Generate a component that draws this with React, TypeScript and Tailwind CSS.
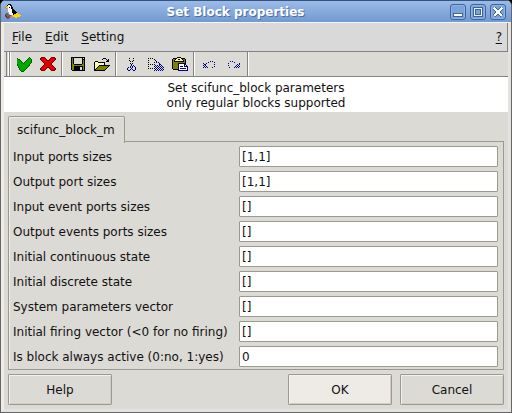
import React from "react";

const colors: Record<string, string> = {
  K: "#000000",
  O: "#808000",
  Y: "#ffff66",
  W: "#ffffff",
  L: "#dcdad5",
  N: "#000080",
  B: "#1b3a9c",
  R: "#e00000",
  D: "#700000",
  G: "#00a800",
  H: "#006000",
  A: "#ffd700",
  T: "#e8701a",
  M: "#a04040",
  E: "#3f8a4a",
};

function PixelIcon({ rows }: { rows: string[] }) {
  const width = Math.max(...rows.map((row) => row.length));
  return (
    <svg width={width} height={rows.length} shapeRendering="crispEdges" aria-hidden="true" className="block shrink-0">
      {rows.flatMap((row, y) =>
        row.split("").map((c, x) =>
          colors[c] ? <rect key={`${x}-${y}`} x={x} y={y} width={1} height={1} fill={colors[c]} /> : null,
        ),
      )}
    </svg>
  );
}

const puffin = [
  "...KKK..........",
  "..KWWKK.........",
  ".TAWWWK.........",
  "TAAWKWKK........",
  ".T.WWWKK........",
  "...WWWWKK.......",
  "...WWWWKKK......",
  "...WWWWKKKK.....",
  "....WWWKKKKK....",
  ".MM.WWWWKKKAA...",
  "MMEE.WWWKAAAAAA.",
  "BMEEMMTAAAAAAAAA",
  "MBEMMT..AAAAAAA.",
  ".BMMMT....AA....",
  "..MM............",
];

const check = [
  "............H..",
  "H..........HGH.",
  "GHH.......HGGGH",
  "GGGH.....HGGGGH",
  "GGGGH...HGGGGGH",
  "GGGGGH.HGGGGGGH",
  "GGGGGGHGGGGGGH.",
  "HGGGGGGGGGGGH..",
  "HGGGGGGGGGGGH..",
  ".HGGGGGGGGGH...",
  ".HGGGGGGGGH....",
  "..HGGGGGGH.....",
  "..HGGGGGH......",
  "...HGGGH.......",
  "....HHH........",
];

const cross = [
  ".DDDD......DDDD.",
  "DRRRRD....DRRRRD",
  "DRRRRRD..DRRRRRD",
  ".DRRRRRDDRRRRRD.",
  "..DRRRRRRRRRRD..",
  "...DRRRRRRRRD...",
  "....DRRRRRRD....",
  "....DRRRRRRD....",
  "...DRRRRRRRRD...",
  "..DRRRRRRRRRRD..",
  ".DRRRRRDDRRRRRD.",
  "DRRRRRD..DRRRRRD",
  "DRRRRD....DRRRRD",
  ".DDDD......DDDD.",
];

const save = [
  "KKKKKKKKKKKKKK",
  "KOKLLLLLLLLKLK",
  "KOKLLLLLLLLKKK",
  "KOKLLLLLLLLKOK",
  "KOKLLLLLLLLKOK",
  "KOKLLLLLLLLKOK",
  "KOKLLLLLLLLKOK",
  "KOOKKKKKKKKOOK",
  "KOOOOOOOOOOOOK",
  "KOOKKKKKKKKKOK",
  "KOOKKKKKKLLKOK",
  "KOOKKKKKKLLKOK",
  "KOOKKKKKKLLKOK",
  ".KKKKKKKKKKKKK",
];

const open = [
  ".........KKK....",
  "........K...K.K.",
  ".............KK.",
  ".KKK........KKK.",
  "KYWYKKKKKKK.....",
  "KWYWYWYWYWK.....",
  "KYWYWYWYWYK.....",
  "KWYWYKKKKKKKKKKK",
  "KYWYKOOOOOOOOOK.",
  "KWYKOOOOOOOOOK..",
  "KYKOOOOOOOOOK...",
  "KKOOOOOOOOOK....",
  "KKKKKKKKKKK.....",
];

const cut = [
  "..K...K......",
  ".............",
  "..K...K......",
  "...K.K.......",
  ".............",
  "...K.K.......",
  "....K........",
  "....N.N......",
  "...N.N.N.....",
  ".N.N.N..N....",
  "N...N...N....",
  "N..N.N..N....",
  ".NN...NN.....",
];

const copy = [
  "K.K.K...........",
  "......K.........",
  "K......K........",
  "........K.......",
  "K.....N.N.N.....",
  "...........N....",
  "K.K.K.N....NN...",
  ".......N.N.N.N..",
  "K.....N.N.N.N.N.",
  ".......N.N.N.N.N",
  "K.K.K.N.N.N.N.N.",
  ".......N.N.N.N.N",
  "......N.N.N.N.N.",
];

const paste = [
  ".....KKKK.......",
  ".KKKKYYYYKKKK...",
  "KOOKYYKKYYKOOK..",
  "KOKYYYYYYYYKOK..",
  "KOKKKKKKKKKKOK..",
  "KOOOOOOOOOOOOK..",
  "KOOOOONNNNNNNK..",
  "KOOOOONWWWWWNN..",
  "KOOOOONWWWWWNWN.",
  "KOOOOONWNNNWNNNN",
  "KOOOOONWWWWWWWWN",
  "KOOOOONWNNNNNNWN",
  ".KKKKKNWWWWWWWWN",
  "......NNNNNNNNNN",
];

const undo = [
  ".......N.N..",
  ".....N.....N",
  "N..N........",
  ".NN........N",
  "N.N.........",
  ".N.N.......N",
  "N.N.N....N..",
];

const redo = [
  "..N.N.......",
  "......N.....",
  "N..........N",
  ".........N.N",
  "N.......N.N.",
  ".......N.N.N",
  ".N....N.N.N.",
];

const toolGroups = [
  {
    className: "w-[52px] pl-[6px] gap-2",
    tools: [
      { label: "Apply", rows: check },
      { label: "Discard", rows: cross },
    ],
  },
  {
    className: "w-[54px] pl-2 gap-[9px]",
    tools: [
      { label: "Save", rows: save },
      { label: "Open", rows: open },
    ],
  },
  {
    className: "w-[78px] pl-[10px] gap-2",
    tools: [
      { label: "Cut", rows: cut },
      { label: "Copy", rows: copy },
      { label: "Paste", rows: paste },
    ],
  },
  {
    className: "w-[54px] pl-2 gap-[13px]",
    tools: [
      { label: "Undo", rows: undo },
      { label: "Redo", rows: redo },
    ],
  },
];

const fields = [
  ["Input ports sizes", "[1,1]"],
  ["Output port sizes", "[1,1]"],
  ["Input event ports sizes", "[]"],
  ["Output events ports sizes", "[]"],
  ["Initial continuous state", "[]"],
  ["Initial discrete state", "[]"],
  ["System parameters vector", "[]"],
  ["Initial firing vector (<0 for no firing)", "[]"],
  ["Is block always active (0:no, 1:yes)", "0"],
];

function WindowButton({ label, children }: { label: string; children: React.ReactNode }) {
  return (
    <button
      aria-label={label}
      className="size-4 rounded-[3px] border border-[#3b659c] bg-[#7ba3d8] shadow-[inset_0_0_0_1px_#8fb3e2]"
    >
      <svg width="14" height="14" shapeRendering="crispEdges" className="block">
        {children}
      </svg>
    </button>
  );
}

function MenuItem({ text }: { text: string }) {
  return (
    <button>
      <span className="underline underline-offset-2">{text[0]}</span>
      {text.slice(1)}
    </button>
  );
}

const pushButton =
  "h-[31px] w-26 rounded-[1px] border border-[#9c9a90] shadow-[inset_1px_1px_0_#f4f2ee,inset_-1px_-1px_0_#cfcdc6]";

export default function App() {
  return (
    <div className="bg-black font-['DejaVu_Sans','Liberation_Sans',sans-serif] text-xs text-[#111]">
      <div className="overflow-hidden rounded-t-md border-x-[1px] border-b-2 border-[#666] bg-[#dcdad5]">
        <header className="flex h-[22px] items-center border-t border-[#34537f] bg-linear-to-b from-[#9bbbe8] to-[#7399cf] pr-[5px] pl-1">
          <PixelIcon rows={puffin} />
          <h1 className="flex-1 text-center text-xs font-bold text-white [text-shadow:1px_1px_0_#4a70a8]">
            Set Block properties
          </h1>
          <div className="flex gap-1">
            <WindowButton label="Minimize">
              <path d="M2 8h10v4H2z" fill="#3b659c" />
              <path d="M3 9h8v2H3z" fill="#fff" />
            </WindowButton>
            <WindowButton label="Maximize">
              <path d="M2 2h10v10H2z" fill="#3b659c" />
              <path d="M3 3h8v8H3z" fill="#e9f1fc" />
              <path d="M4 4h6v6H4z" fill="#3b659c" />
              <path d="M5 5h4v4H5z" fill="#7ba3d8" />
            </WindowButton>
            <WindowButton label="Close">
              <path d="M3 3l8 8M11 3l-8 8" stroke="#3b659c" strokeWidth="4" />
              <path d="M3 3l8 8M11 3l-8 8" stroke="#fff" strokeWidth="2" />
            </WindowButton>
          </div>
        </header>

        <div className="border-x-[3px] border-t border-b-[3px] border-t-[#f7f5f2] border-r-[#e4e2df] border-b-[#e4e2df] border-l-[#efebe7]">
          <nav className="flex h-[29px] items-center gap-[13px] border-r border-b border-[#828282] bg-[#d9d9d9] pr-[5px] pl-2">
            <MenuItem text="File" />
            <MenuItem text="Edit" />
            <MenuItem text="Setting" />
            <span className="flex-1" />
            <MenuItem text="?" />
          </nav>

          <div role="toolbar" className="flex h-[25px] border-b border-[#85837d] pl-[2px]">
            <div className="flex w-1 justify-center border-x border-[#85837d]">
              <span className="w-px bg-white" />
            </div>
            {toolGroups.map((group, i) => (
              <div
                key={i}
                className={`flex items-center border-r border-l border-r-[#85837d] border-l-white ${group.className}`}
              >
                {group.tools.map((tool) => (
                  <button key={tool.label} aria-label={tool.label}>
                    <PixelIcon rows={tool.rows} />
                  </button>
                ))}
              </div>
            ))}
            <span className="w-px bg-white" />
          </div>

          <p className="h-[35px] bg-white pt-1 text-center leading-[15px]">
            Set scifunc_block parameters
            <br />
            only regular blocks supported
          </p>

          <main className="px-1 pt-1">
            <div role="tablist" className="flex">
              <button
                role="tab"
                aria-selected="true"
                className="-mb-px h-[27px] rounded-t-[2px] border border-b-0 border-[#9c9a90] bg-[#dcdad5] pr-[9px] pb-px pl-2 shadow-[inset_1px_1px_0_#efede8]"
              >
                scifunc_block_m
              </button>
            </div>
            <section
              role="tabpanel"
              className="-mt-px flex flex-col gap-1 border border-[#9c9a90] pt-1 pr-[5px] pb-[2px] pl-1 shadow-[inset_1px_0_0_#efede8]"
            >
              {fields.map(([label, value]) => (
                <label key={label} className="grid grid-cols-[226px_1fr] items-center">
                  <span>{label}</span>
                  <input
                    defaultValue={value}
                    className="h-[21px] w-full min-w-0 rounded-[1px] border border-[#9c9a90] bg-white px-[2px] outline-none"
                  />
                </label>
              ))}
            </section>
            <footer className="flex gap-2 pt-1 pb-1">
              <button className={`${pushButton} mr-auto`}>Help</button>
              <button className={`${pushButton} bg-[#eeebe7]`}>OK</button>
              <button className={pushButton}>Cancel</button>
            </footer>
          </main>
        </div>
      </div>
    </div>
  );
}
